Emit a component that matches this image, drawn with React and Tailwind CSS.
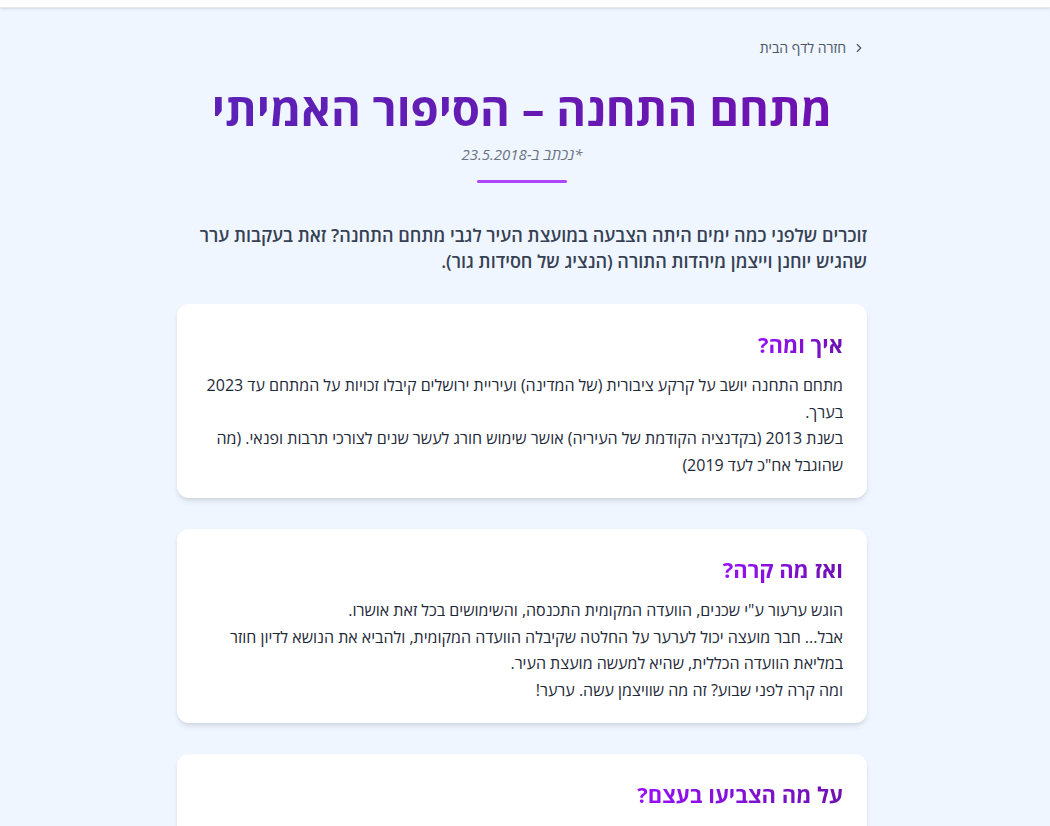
import { ChevronRight } from 'lucide-react'

const sections = [
    {
        title: 'איך ומה?',
        lines: [
            'מתחם התחנה יושב על קרקע ציבורית (של המדינה) ועיריית ירושלים קיבלו זכויות על המתחם עד 2023 בערך.',
            'בשנת 2013 (בקדנציה הקודמת של העיריה) אושר שימוש חורג לעשר שנים לצורכי תרבות ופנאי. (מה שהוגבל אח"כ לעד 2019)',
        ],
    },
    {
        title: 'ואז מה קרה?',
        lines: [
            'הוגש ערעור ע"י שכנים, הוועדה המקומית התכנסה, והשימושים בכל זאת אושרו.',
            'אבל... חבר מועצה יכול לערער על החלטה שקיבלה הוועדה המקומית, ולהביא את הנושא לדיון חוזר במליאת הוועדה הכללית, שהיא למעשה מועצת העיר.',
            'ומה קרה לפני שבוע? זה מה שוויצמן עשה. ערער!',
        ],
    },
    {
        title: 'על מה הצביעו בעצם?',
        lines: [
            'המליאה הצביעה על הערעור של וייצמן, כלומר האם לבטל את אישור השימוש החורג שניתן למתחם התחנה לצורכי תרבות ופנאי.',
        ],
    },
]

function Card({ title, lines }) {
    return (
        <div className="bg-white rounded-xl shadow-md px-6 pt-6 pb-5 mb-[31px]">
            <h2 className="text-[22px] leading-8 font-bold mb-3 bg-gradient-to-l from-purple-800 to-purple-600 bg-clip-text text-transparent w-fit">
                {title}
            </h2>
            <p className="text-[16px] leading-[26.5px] text-gray-800">
                {lines.map((l, i) => (
                    <span key={i}>
                        {l}
                        {i < lines.length - 1 && <br />}
                    </span>
                ))}
            </p>
        </div>
    )
}

export default function App() {
    return (
        <div dir="rtl" className="min-h-screen bg-blue-50" style={{ fontFamily: '"Open Sans", "Noto Sans", sans-serif' }}>
            <div className="h-2 bg-white border-b border-gray-200 shadow-sm" />
            <div className="pr-1.5">
                <div className="max-w-[690px] mx-auto pt-[30px]">
                    <div className="flex justify-start">
                        <a href="#" className="flex items-center gap-1.5 text-sm text-gray-600 mr-[1px]">
                            <ChevronRight className="w-3.5 h-3.5" strokeWidth={2} />
                            חזרה לדף הבית
                        </a>
                    </div>
                    <h1 className="mt-6 text-center text-[45.5px] leading-[53px] font-bold bg-gradient-to-l from-purple-800 to-[#5b21b6] bg-clip-text text-transparent w-fit mx-auto">
                        מתחם התחנה – הסיפור האמיתי
                    </h1>
                    <p className="mt-2 text-center text-[15px] leading-[22px] italic text-gray-500">*נכתב ב-23.5.2018</p>
                    <div className="mt-[15px] mx-auto w-[90px] h-[3px] bg-purple-500 rounded-full" />
                    <p className="mt-[39px] text-[18px] leading-[26px] font-semibold text-gray-700">
                        זוכרים שלפני כמה ימים היתה הצבעה במועצת העיר לגבי מתחם התחנה? זאת בעקבות ערר שהגיש יוחנן וייצמן מיהדות התורה (הנציג של חסידות גור).
                    </p>
                    <div className="mt-[30px]">
                        {sections.map((s) => (
                            <Card key={s.title} {...s} />
                        ))}
                    </div>
                </div>
            </div>
        </div>
    )
}
